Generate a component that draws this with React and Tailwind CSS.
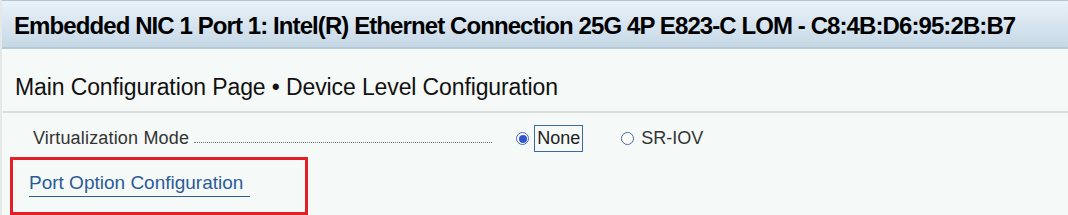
export default function App() {
  return (
    <div
      className="w-[1068px] h-[215px] bg-[#f5f9f7] border-l-2 border-[#e4e8e6] overflow-hidden"
      style={{ fontFamily: '"Liberation Sans", Arial, sans-serif' }}
    >
      <div className="h-[49px] border-t border-b-2 border-t-[#b9c6d0] border-b-[#b7c8d6] bg-gradient-to-b from-[#eaf2f9] to-[#c6d8e6] flex items-center pl-3 pt-[4px]">
        <span className="text-[24px] font-bold text-black tracking-[-0.038em] whitespace-nowrap">
          Embedded NIC 1 Port 1: Intel(R) Ethernet Connection 25G 4P E823-C LOM - C8:4B:D6:95:2B:B7
        </span>
      </div>

      <div className="pl-3 pt-[27px] h-[64px] border-b-2 border-[#d9dcdb] ml-[1px]">
        <span className="text-[23px] text-[#111] leading-none whitespace-nowrap tracking-[-0.005em]">
          Main Configuration Page • Device Level Configuration
        </span>
      </div>

      <div className="flex items-center h-[44px] pl-[31px] text-[18px] text-[#333] pt-[7px]">
        <span className="whitespace-nowrap tracking-[0.01em]">Virtualization Mode</span>
        <span className="ml-[5px] w-[298px] border-b border-dotted border-[#777] mt-[8px]" />
        <div className="ml-[24px] flex items-center">
          <span className="w-[13px] h-[13px] rounded-full border border-[#4a6aa6] bg-white flex items-center justify-center">
            <span className="w-[8px] h-[8px] rounded-full bg-[#2f56d0]" />
          </span>
          <span className="ml-[5px] px-[2px] h-[27px] flex items-center border border-[#3f68a6] text-[#222]">
            None
          </span>
        </div>
        <div className="ml-[38px] flex items-center">
          <span className="w-[13px] h-[13px] rounded-full border border-[#4a6aa6] bg-white" />
          <span className="ml-[7px] text-[#333]">SR-IOV</span>
        </div>
      </div>

      <div className="ml-[8px] w-[298px] h-[58px] border-[3px] border-[#e41e25] pl-[16px] pt-[11px]">
        <span className="inline-block text-[19px] text-[#2c5b98] border-b border-[#2c5b98] pr-[7px] pb-[1px] leading-[24px]">
          Port Option Configuration
        </span>
      </div>
    </div>
  );
}
